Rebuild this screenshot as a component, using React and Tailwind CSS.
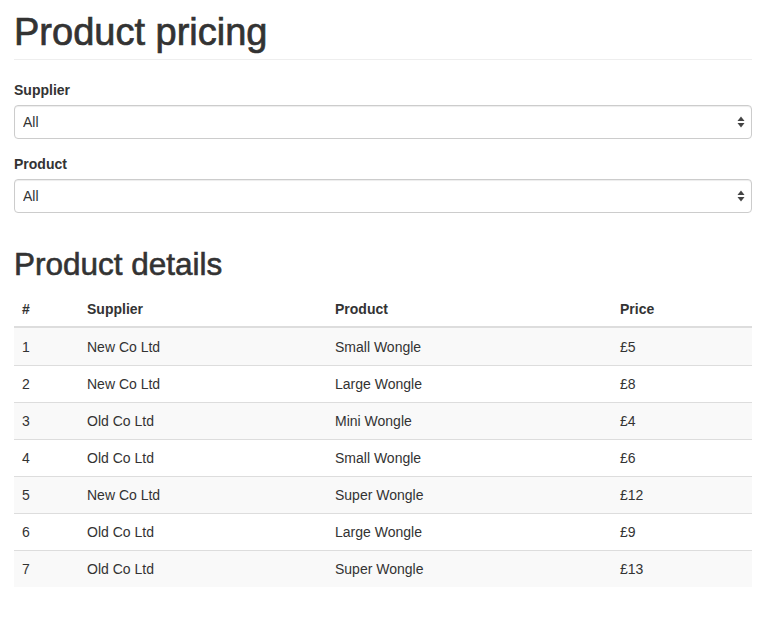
import React from "react";

const rows = [
  { id: 1, supplier: "New Co Ltd", product: "Small Wongle", price: "£5" },
  { id: 2, supplier: "New Co Ltd", product: "Large Wongle", price: "£8" },
  { id: 3, supplier: "Old Co Ltd", product: "Mini Wongle", price: "£4" },
  { id: 4, supplier: "Old Co Ltd", product: "Small Wongle", price: "£6" },
  { id: 5, supplier: "New Co Ltd", product: "Super Wongle", price: "£12" },
  { id: 6, supplier: "Old Co Ltd", product: "Large Wongle", price: "£9" },
  { id: 7, supplier: "Old Co Ltd", product: "Super Wongle", price: "£13" },
];

function Arrows() {
  return (
    <svg width="8" height="12" viewBox="0 0 8 12" className="absolute right-[7px] top-1/2 -translate-y-1/2 pointer-events-none">
      <path d="M4 0.5 L7.5 5 L0.5 5 Z" fill="#444" />
      <path d="M4 11.5 L7.5 7 L0.5 7 Z" fill="#444" />
    </svg>
  );
}

function SelectField({ label, className }) {
  return (
    <div className={className}>
      <label className="block text-[14px] font-bold leading-5 mb-[5px]">{label}</label>
      <div className="relative">
        <select className="appearance-none block w-full h-[34px] px-[8px] text-[14px] text-[#333] bg-white border border-[#ccc] rounded-[4px] shadow-[inset_0_1px_1px_rgba(0,0,0,0.075)] outline-none">
          <option>All</option>
        </select>
        <Arrows />
      </div>
    </div>
  );
}

export default function App() {
  return (
    <div className="min-h-screen bg-white text-[#333] font-['Liberation_Sans',Arial,sans-serif] text-[14px] leading-5">
      <div className="px-[14px] w-[766px]">
        <div className="pt-[11px] pb-[6px] border-b border-[#eee]">
          <h1 className="text-[38px] leading-[42px] [-webkit-text-stroke:0.7px_#333]">Product pricing</h1>
        </div>

        <form className="mt-[20px]">
          <SelectField label="Supplier" className="mb-[15px]" />
          <SelectField label="Product" />
        </form>

        <h2 className="mt-[34px] mb-[10px] text-[31.5px] leading-[34px] [-webkit-text-stroke:0.6px_#333]">Product details</h2>

        <div className="w-[738px]">
          <div className="grid grid-cols-[65px_248px_285px_140px] h-[37px] items-center border-b-2 border-[#ddd] font-bold">
            <div className="pl-[8px]">#</div>
            <div className="pl-[8px]">Supplier</div>
            <div className="pl-[8px]">Product</div>
            <div className="pl-[8px]">Price</div>
          </div>
          {rows.map((row, i) => (
            <div
              key={row.id}
              className={`grid grid-cols-[65px_248px_285px_140px] h-[37px] items-center ${i > 0 ? "border-t border-[#ddd]" : ""} ${i % 2 === 0 ? "bg-[#f9f9f9]" : "bg-white"}`}
            >
              <div className="pl-[8px]">{row.id}</div>
              <div className="pl-[8px]">{row.supplier}</div>
              <div className="pl-[8px]">{row.product}</div>
              <div className="pl-[8px]">{row.price}</div>
            </div>
          ))}
        </div>
      </div>
    </div>
  );
}
